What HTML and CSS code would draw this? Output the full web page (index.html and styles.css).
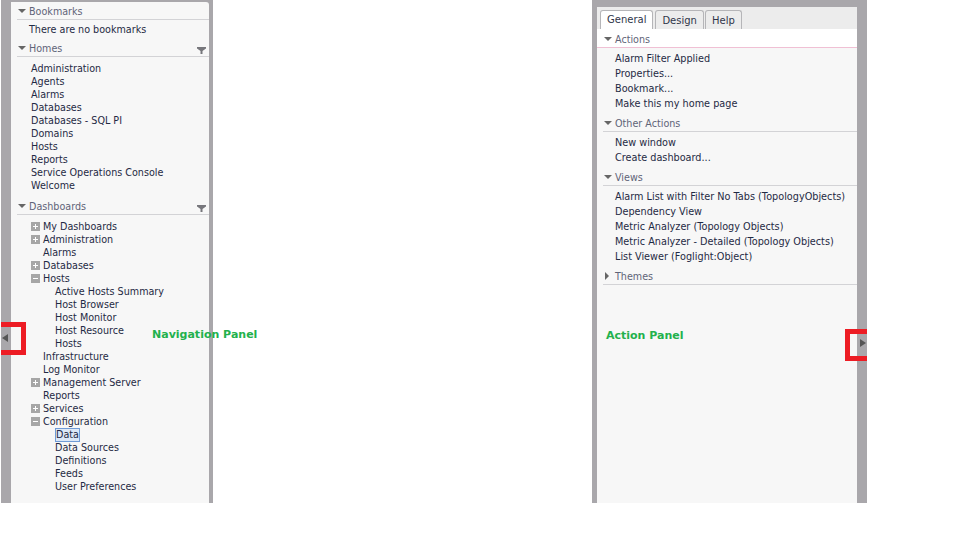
FILE: index.html
```html
<!DOCTYPE html>
<html>
<head>
    <meta charset="UTF-8">
    <title>Navigation and Action Panels</title>
    <link rel="stylesheet" href="styles.css">
</head>
<body>
<div class="page">
    <div class="frame nav-frame">
        <div class="panel">
            <div class="section-head first"><span class="arrow-down"></span>Bookmarks</div>
            <div class="empty-row">There are no bookmarks</div>

            <div class="section-head homes"><span class="arrow-down"></span>Homes<svg class="filter" width="9" height="7" viewBox="0 0 9 7"><path d="M0 0H9V1.500L5.500 4V7H3.500V4L0 1.500Z"/></svg></div>
            <ul class="list homes-list">
                <li>Administration</li>
                <li>Agents</li>
                <li>Alarms</li>
                <li>Databases</li>
                <li>Databases - SQL PI</li>
                <li>Domains</li>
                <li>Hosts</li>
                <li>Reports</li>
                <li>Service Operations Console</li>
                <li>Welcome</li>
            </ul>

            <div class="section-head dash"><span class="arrow-down"></span>Dashboards<svg class="filter" width="9" height="7" viewBox="0 0 9 7"><path d="M0 0H9V1.500L5.500 4V7H3.500V4L0 1.500Z"/></svg></div>
            <ul class="list tree">
                <li><span class="toggle plus"></span>My Dashboards</li>
                <li><span class="toggle plus"></span>Administration</li>
                <li class="leaf">Alarms</li>
                <li><span class="toggle plus"></span>Databases</li>
                <li><span class="toggle minus"></span>Hosts</li>
                <li class="sub">Active Hosts Summary</li>
                <li class="sub">Host Browser</li>
                <li class="sub">Host Monitor</li>
                <li class="sub">Host Resource</li>
                <li class="sub">Hosts</li>
                <li class="leaf">Infrastructure</li>
                <li class="leaf">Log Monitor</li>
                <li><span class="toggle plus"></span>Management Server</li>
                <li class="leaf">Reports</li>
                <li><span class="toggle plus"></span>Services</li>
                <li><span class="toggle minus"></span>Configuration</li>
                <li class="sub"><span class="selected">Data</span></li>
                <li class="sub">Data Sources</li>
                <li class="sub">Definitions</li>
                <li class="sub">Feeds</li>
                <li class="sub">User Preferences</li>
            </ul>
        </div>
    </div>

    <div class="frame action-frame">
        <div class="panel action-panel">
            <div class="tabs">
                <div class="tab active">General</div>
                <div class="tab">Design</div>
                <div class="tab">Help</div>
            </div>
            <div class="section-head action-first"><span class="arrow-down"></span>Actions</div>
            <ul class="list actions">
                <li>Alarm Filter Applied</li>
                <li>Properties...</li>
                <li>Bookmark...</li>
                <li>Make this my home page</li>
            </ul>
            <div class="section-head action-next"><span class="arrow-down"></span>Other Actions</div>
            <ul class="list actions">
                <li>New window</li>
                <li>Create dashboard...</li>
            </ul>
            <div class="section-head action-next"><span class="arrow-down"></span>Views</div>
            <ul class="list actions">
                <li>Alarm List with Filter No Tabs (TopologyObjects)</li>
                <li>Dependency View</li>
                <li>Metric Analyzer (Topology Objects)</li>
                <li>Metric Analyzer - Detailed (Topology Objects)</li>
                <li>List Viewer (Foglight:Object)</li>
            </ul>
            <div class="section-head action-next"><span class="arrow-right"></span>Themes</div>
        </div>
    </div>

    <span class="grip grip-left"></span>
    <span class="grip grip-right"></span>
    <div class="mark mark-left"></div>
    <div class="mark mark-right"></div>
    <div class="note note-nav">Navigation Panel</div>
    <div class="note note-action">Action Panel</div>
</div>
</body>
</html>
```

FILE: styles.css
```css
html, body {
    margin: 0;
    background: #fff;
}
body {
    font-family: "DejaVu Sans", Verdana, sans-serif;
    font-size: 9.6px;
    color: #1f2a44;
}
.page {
    position: relative;
    display: flex;
    width: 960px;
    height: 503px;
}
.frame {
    background: #a9a7ab;
    box-sizing: border-box;
}
.nav-frame {
    width: 212px;
    margin-left: 1px;
    padding: 2px 4px 0 10px;
}
.action-frame {
    width: 275px;
    margin-left: 379px;
    padding: 7px 10px 0 5px;
}
.panel {
    height: 100%;
    background: #f7f7f7;
    overflow: hidden;
}
.nav-frame .panel {
    border-top-right-radius: 3px;
}

.section-head {
    position: relative;
    height: 16px;
    line-height: 18px;
    margin-left: 6px;
    padding-left: 12px;
    color: #5f6478;
    border-bottom: 1px solid #d3d3d6;
}
.section-head.first {
    margin-top: 1px;
}
.section-head.homes {
    margin-top: 4px;
}
.section-head.dash {
    margin-top: 6px;
}
.arrow-down {
    position: absolute;
    left: 1px;
    top: 6px;
    border-left: 4px solid transparent;
    border-right: 4px solid transparent;
    border-top: 4px solid #666;
}
.arrow-right {
    position: absolute;
    left: 2px;
    top: 4px;
    border-top: 4px solid transparent;
    border-bottom: 4px solid transparent;
    border-left: 4px solid #666;
}
.filter {
    position: absolute;
    right: 3px;
    top: 7px;
    fill: #77777c;
}

.empty-row {
    height: 13px;
    line-height: 13px;
    margin-top: 3px;
    padding-left: 18px;
}
.list {
    list-style: none;
    margin: 0;
    padding: 0;
}
.list li {
    height: 13px;
    line-height: 13px;
    white-space: nowrap;
}
.homes-list {
    margin-top: 5px;
    padding-left: 20px;
}
.tree {
    margin-top: 5px;
    padding-left: 20px;
}
.tree .leaf {
    padding-left: 12px;
}
.tree .sub {
    padding-left: 24px;
}
.toggle {
    display: inline-block;
    position: relative;
    width: 9px;
    height: 9px;
    margin-right: 3px;
    background: #a6a6a6;
    vertical-align: -1px;
}
.toggle::before {
    content: "";
    position: absolute;
    left: 2px;
    top: 4px;
    width: 5px;
    height: 1px;
    background: #fff;
}
.plus::after {
    content: "";
    position: absolute;
    left: 4px;
    top: 2px;
    width: 1px;
    height: 5px;
    background: #fff;
}
.selected {
    display: inline-block;
    height: 12px;
    line-height: 12px;
    margin-left: 1px;
    background: #dce8f7;
    outline: 1px solid #6f9bd6;
}

.tabs {
    display: flex;
    height: 22px;
    padding: 3px 0 0 3px;
    box-sizing: border-box;
    background: #ececec;
}
.tab {
    box-sizing: border-box;
    height: 19px;
    line-height: 20px;
    padding: 0 6px;
    margin-right: 1px;
    font-size: 10px;
    border: 1px solid #b5b5b8;
    border-bottom: 0;
    border-radius: 3px 3px 0 0;
    background: #ececec;
    color: #30364a;
}
.tab.active {
    height: 20px;
    line-height: 18px;
    background: #fff;
    margin-right: 2px;
}
.section-head.action-first {
    background: #fff;
    border-bottom-color: #f0c0d4;
    height: 18px;
    margin-left: 0;
    padding-left: 18px;
    line-height: 21px;
}
.section-head.action-first .arrow-down {
    left: 7px;
    top: 8px;
}
.section-head.action-next {
    margin-top: 4px;
}
.actions {
    margin-top: 3px;
    padding-left: 18px;
    font-size: 9.7px;
}
.actions li {
    height: 15px;
    line-height: 15px;
}

.grip {
    position: absolute;
}
.grip-left {
    left: 2px;
    top: 334px;
    border-top: 4px solid transparent;
    border-bottom: 4px solid transparent;
    border-right: 6px solid #555;
}
.grip-right {
    left: 860px;
    top: 339px;
    border-top: 4px solid transparent;
    border-bottom: 4px solid transparent;
    border-left: 6px solid #555;
}
.mark {
    position: absolute;
    box-sizing: border-box;
    border: 5px solid #ed1c24;
}
.mark-left {
    left: 1px;
    top: 322px;
    width: 25px;
    height: 33px;
    border-left: 0;
}
.mark-right {
    left: 845px;
    top: 329px;
    width: 22px;
    height: 32px;
    border-right: 0;
}
.note {
    position: absolute;
    font-weight: bold;
    font-size: 11px;
    line-height: 14px;
    color: #22b14c;
}
.note-nav {
    left: 152px;
    top: 328px;
}
.note-action {
    left: 606px;
    top: 329px;
}
```
